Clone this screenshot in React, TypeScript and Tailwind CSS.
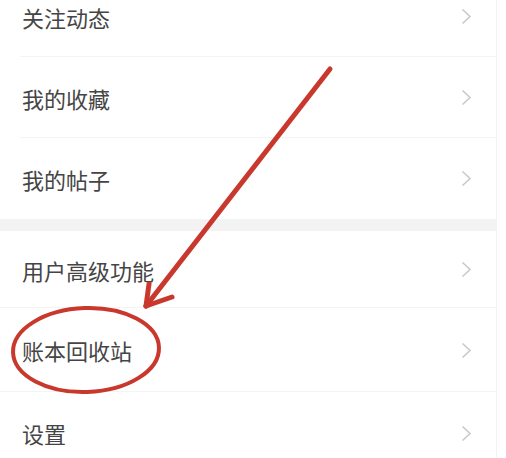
type Row = { label: string; h: string };

const groupOne: Row[] = [
  { label: "关注动态", h: "h-[81px]" },
  { label: "我的收藏", h: "h-[81px]" },
  { label: "我的帖子", h: "h-[81px]" },
];

const groupTwo: Row[] = [
  { label: "用户高级功能", h: "h-[77px]" },
  { label: "账本回收站", h: "h-[84px]" },
  { label: "设置", h: "h-[82px]" },
];

const Chevron = () => (
  <svg width="11" height="17" viewBox="0 0 11 17" className="text-[#c8c8c8]">
    <polyline points="1.5,1.5 9,8.5 1.5,15.5" fill="none" stroke="currentColor" strokeWidth="1.5" />
  </svg>
);

const MenuRow = ({ row, inset, last }: { row: Row; inset: boolean; last: boolean }) => (
  <div className={`relative flex items-center justify-between pl-[22px] pr-[24px] ${row.h}`}>
    <span className="text-[22px] leading-none text-[#454545]">{row.label}</span>
    <Chevron />
    {!last && (
      <div className={`absolute bottom-0 right-0 h-px bg-[#f4f4f4] ${inset ? "left-[20px]" : "left-0"}`} />
    )}
  </div>
);

// Red hand-drawn annotation on top of the list
const Annotation = () => (
  <svg className="pointer-events-none absolute left-0 top-0" width="506" height="458" viewBox="0 0 506 458">
    <g stroke="#c9382d" strokeLinecap="round" strokeLinejoin="round" fill="none">
      <path d="M330 69 L146 306" strokeWidth="5" />
      <path d="M146 306 L149 284" strokeWidth="5" />
      <path d="M146 306 L172 297" strokeWidth="5" />
      <ellipse cx="86" cy="350" rx="73" ry="42" strokeWidth="4" transform="rotate(-2 86 350)" />
    </g>
  </svg>
);

export default function App() {
  return (
    <div
      className="relative h-[458px] w-[506px] overflow-hidden bg-white"
      style={{ fontFamily: '"Noto Sans CJK SC", "Noto Sans", sans-serif' }}
    >
      <div className="w-[497px] border-r border-[#f2f2f2]">
        <div className="-mt-[24px] bg-white">
          {groupOne.map((row, i) => (
            <MenuRow key={row.label} row={row} inset last={i === groupOne.length - 1} />
          ))}
        </div>
        <div className="h-[12px] bg-[#f3f3f3]" />
        <div className="bg-white">
          {groupTwo.map((row, i) => (
            <MenuRow key={row.label} row={row} inset={false} last={i === groupTwo.length - 1} />
          ))}
        </div>
      </div>
      <Annotation />
    </div>
  );
}
